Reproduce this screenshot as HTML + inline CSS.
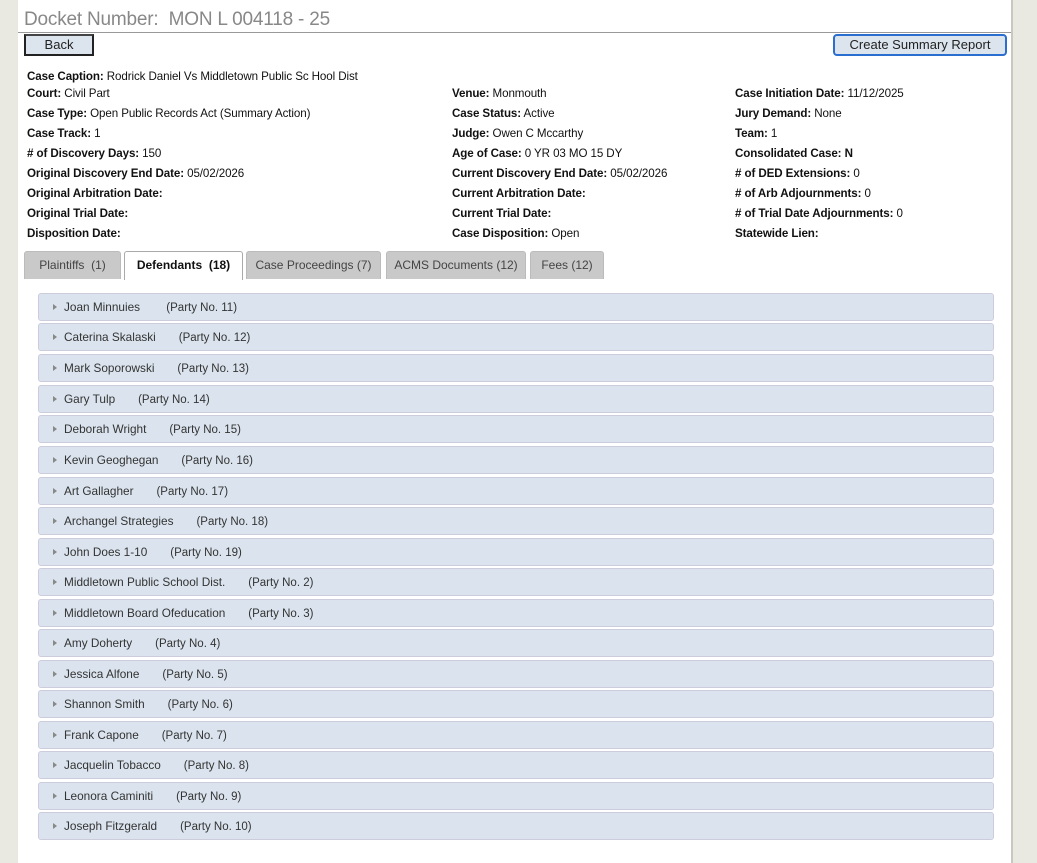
<!DOCTYPE html>
<html><head><style>
*{margin:0;padding:0;box-sizing:border-box}
body{width:1037px;height:863px;background:#e9e9e2;font-family:"Liberation Sans",sans-serif;font-size:12px;color:#111;position:relative;overflow:hidden}
#main{position:absolute;left:18px;top:0;width:995px;height:863px;background:#fff;border-right:2px solid #c8c8c0}
h1{position:absolute;left:6px;top:9px;font-size:19px;font-weight:normal;color:#888;white-space:nowrap;letter-spacing:-0.2px}
.rule{position:absolute;left:0;top:32px;width:993px;height:1px;background:#999}
.btn{position:absolute;background:#dce4ee;font-size:13px;color:#222;text-align:center}
.info{position:absolute;font-size:11.6px;white-space:nowrap;letter-spacing:-0.1px}
.info b{font-weight:bold}
.tab{position:absolute;top:251px;height:28px;background:#c9c9c9;border:1px solid #bbb;border-bottom:none;border-radius:3px 3px 0 0;font-size:12px;color:#444;line-height:26px;text-align:center}
.tab.act{background:#fff;color:#111;font-weight:bold;border-color:#aaa;height:29px}
.row{position:absolute;left:20px;width:956px;height:28px;background:#dbe4ee;border:1px solid #ccd;border-radius:3px;font-size:11.8px;color:#333;line-height:26px;padding-left:25px;white-space:nowrap}
.row:before{content:"";position:absolute;left:14px;top:10px;border-left:4px solid #888;border-top:3.5px solid transparent;border-bottom:3.5px solid transparent}
.row span{font-size:11.5px}
</style></head><body>
<div id="main">
<h1>Docket Number:&nbsp; MON L 004118 - 25</h1>
<div class="rule"></div>
<div class="btn" style="left:6px;top:34px;width:70px;height:22px;border:2px solid #222;border-top-color:#444;line-height:18px">Back</div>
<div class="btn" style="left:815px;top:34px;width:174px;height:22px;border:2px solid #2a6fd0;border-radius:4px;line-height:18px">Create Summary Report</div>

<div class="info" style="left:9px;top:70px"><b>Case Caption:</b> Rodrick Daniel Vs Middletown Public Sc Hool Dist</div>
<div class="info" style="left:9px;top:87px"><b>Court:</b> Civil Part</div>
<div class="info" style="left:9px;top:107px"><b>Case Type:</b> Open Public Records Act (Summary Action)</div>
<div class="info" style="left:9px;top:127px"><b>Case Track:</b> 1</div>
<div class="info" style="left:9px;top:147px"><b># of Discovery Days:</b> 150</div>
<div class="info" style="left:9px;top:167px"><b>Original Discovery End Date:</b> 05/02/2026</div>
<div class="info" style="left:9px;top:187px"><b>Original Arbitration Date:</b></div>
<div class="info" style="left:9px;top:207px"><b>Original Trial Date:</b></div>
<div class="info" style="left:9px;top:227px"><b>Disposition Date:</b></div>

<div class="info" style="left:434px;top:87px"><b>Venue:</b> Monmouth</div>
<div class="info" style="left:434px;top:107px"><b>Case Status:</b> Active</div>
<div class="info" style="left:434px;top:127px"><b>Judge:</b> Owen C Mccarthy</div>
<div class="info" style="left:434px;top:147px"><b>Age of Case:</b> 0 YR 03 MO 15 DY</div>
<div class="info" style="left:434px;top:167px"><b>Current Discovery End Date:</b> 05/02/2026</div>
<div class="info" style="left:434px;top:187px"><b>Current Arbitration Date:</b></div>
<div class="info" style="left:434px;top:207px"><b>Current Trial Date:</b></div>
<div class="info" style="left:434px;top:227px"><b>Case Disposition:</b> Open</div>

<div class="info" style="left:717px;top:87px"><b>Case Initiation Date:</b> 11/12/2025</div>
<div class="info" style="left:717px;top:107px"><b>Jury Demand:</b> None</div>
<div class="info" style="left:717px;top:127px"><b>Team:</b> 1</div>
<div class="info" style="left:717px;top:147px"><b>Consolidated Case:</b> <b>N</b></div>
<div class="info" style="left:717px;top:167px"><b># of DED Extensions:</b> 0</div>
<div class="info" style="left:717px;top:187px"><b># of Arb Adjournments:</b> 0</div>
<div class="info" style="left:717px;top:207px"><b># of Trial Date Adjournments:</b> 0</div>
<div class="info" style="left:717px;top:227px"><b>Statewide Lien:</b></div>

<div class="tab" style="left:6px;width:97px">Plaintiffs&nbsp; (1)</div>
<div class="tab act" style="left:106px;width:119px">Defendants&nbsp; (18)</div>
<div class="tab" style="left:228px;width:135px">Case Proceedings (7)</div>
<div class="tab" style="left:368px;width:140px">ACMS Documents (12)</div>
<div class="tab" style="left:512px;width:74px">Fees (12)</div>

<div class="row" style="top:293px">Joan Minnuies &nbsp; &nbsp; &nbsp; &nbsp;<span>(Party No. 11)</span></div>
<div class="row" style="top:323px">Caterina Skalaski &nbsp; &nbsp; &nbsp; <span>(Party No. 12)</span></div>
<div class="row" style="top:354px">Mark Soporowski &nbsp; &nbsp; &nbsp; <span>(Party No. 13)</span></div>
<div class="row" style="top:385px">Gary Tulp &nbsp; &nbsp; &nbsp; <span>(Party No. 14)</span></div>
<div class="row" style="top:415px">Deborah Wright &nbsp; &nbsp; &nbsp; <span>(Party No. 15)</span></div>
<div class="row" style="top:446px">Kevin Geoghegan &nbsp; &nbsp; &nbsp; <span>(Party No. 16)</span></div>
<div class="row" style="top:477px">Art Gallagher &nbsp; &nbsp; &nbsp; <span>(Party No. 17)</span></div>
<div class="row" style="top:507px">Archangel Strategies &nbsp; &nbsp; &nbsp; <span>(Party No. 18)</span></div>
<div class="row" style="top:538px">John Does 1-10 &nbsp; &nbsp; &nbsp; <span>(Party No. 19)</span></div>
<div class="row" style="top:568px">Middletown Public School Dist. &nbsp; &nbsp; &nbsp; <span>(Party No. 2)</span></div>
<div class="row" style="top:599px">Middletown Board Ofeducation &nbsp; &nbsp; &nbsp; <span>(Party No. 3)</span></div>
<div class="row" style="top:629px">Amy Doherty &nbsp; &nbsp; &nbsp; <span>(Party No. 4)</span></div>
<div class="row" style="top:660px">Jessica Alfone &nbsp; &nbsp; &nbsp; <span>(Party No. 5)</span></div>
<div class="row" style="top:690px">Shannon Smith &nbsp; &nbsp; &nbsp; <span>(Party No. 6)</span></div>
<div class="row" style="top:721px">Frank Capone &nbsp; &nbsp; &nbsp; <span>(Party No. 7)</span></div>
<div class="row" style="top:751px">Jacquelin Tobacco &nbsp; &nbsp; &nbsp; <span>(Party No. 8)</span></div>
<div class="row" style="top:782px">Leonora Caminiti &nbsp; &nbsp; &nbsp; <span>(Party No. 9)</span></div>
<div class="row" style="top:812px">Joseph Fitzgerald &nbsp; &nbsp; &nbsp; <span>(Party No. 10)</span></div>
</div>
</body></html>
